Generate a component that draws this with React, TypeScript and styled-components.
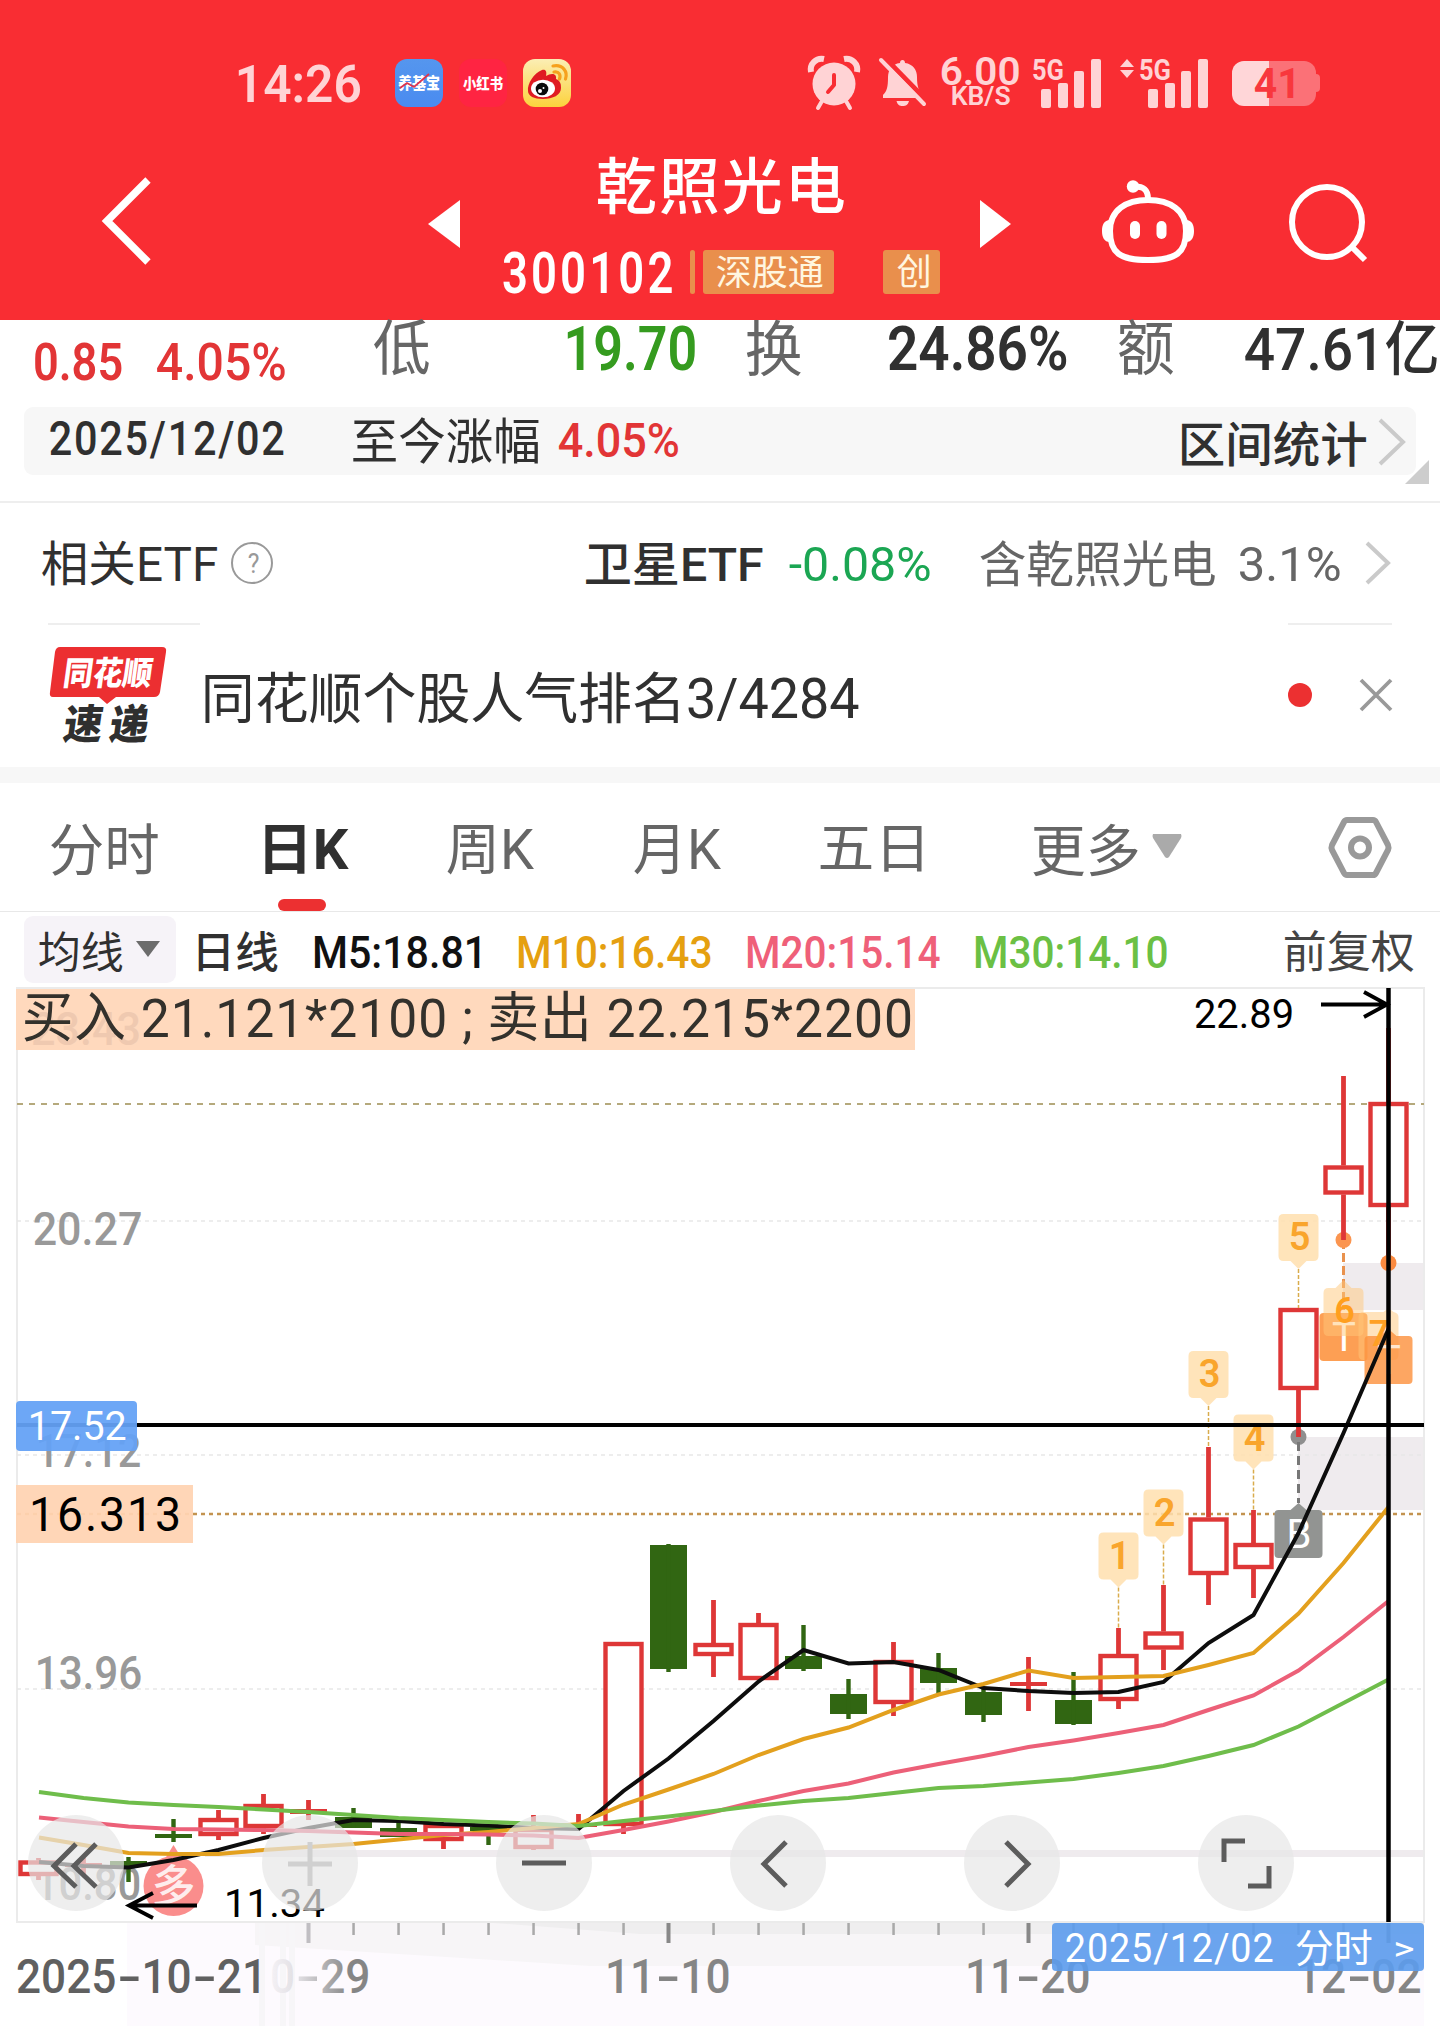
import React, { ReactNode, useLayoutEffect, useRef, useState } from "react";
import styled, { createGlobalStyle } from "styled-components";

const FONT = `Roboto, "Noto Sans CJK SC", sans-serif`;

const GlobalStyle = createGlobalStyle`
  html, body { margin: 0; padding: 0; background: #fff; }
  body { width: 1440px; font-family: ${FONT}; overflow-x: hidden; }
  svg { display: block; flex: none; overflow: visible; }
`;

/* ---------- text that fills an exact ink width ---------- */

interface LabelProps {
  w: number;
  size: number;
  ml?: number;
  mt?: number;
  weight?: number;
  color?: string;
  italic?: boolean;
  tracking?: number;
  children: string;
}

const LabelBox = styled.div<{ $w: number; $size: number; $ml: number; $mt: number }>`
  flex: none;
  width: ${(p) => p.$w}px;
  height: ${(p) => p.$size}px;
  margin-left: ${(p) => p.$ml}px;
  margin-top: ${(p) => p.$mt}px;
`;

const LabelText = styled.span<{
  $size: number;
  $weight: number;
  $color: string;
  $italic: boolean;
  $tracking: number;
}>`
  display: inline-block;
  white-space: pre;
  font-family: ${FONT};
  font-size: ${(p) => p.$size}px;
  line-height: ${(p) => p.$size}px;
  height: ${(p) => p.$size}px;
  font-weight: ${(p) => p.$weight};
  font-style: ${(p) => (p.$italic ? "italic" : "normal")};
  letter-spacing: ${(p) => p.$tracking}px;
  color: ${(p) => p.$color};
  transform-origin: 0 0;
`;

function Label({
  w,
  size,
  ml = 0,
  mt = 0,
  weight = 400,
  color = "#303030",
  italic = false,
  tracking = 0,
  children,
}: LabelProps) {
  const ref = useRef<HTMLSpanElement>(null);
  const [fit, setFit] = useState({ s: 1, x: 0, y: 0 });
  useLayoutEffect(() => {
    const ctx = document.createElement("canvas").getContext("2d");
    if (!ctx || !ref.current) return;
    ctx.font = `${italic ? "italic " : ""}${weight} ${size}px ${FONT}`;
    (ctx as unknown as { letterSpacing: string }).letterSpacing = `${tracking}px`;
    const m = ctx.measureText(children);
    const ink = m.actualBoundingBoxLeft + m.actualBoundingBoxRight;
    const s = w / ink;
    const baseline = size / 2 + (0.927 - 0.244) * size * 0.5;
    const mid = baseline - (m.actualBoundingBoxAscent - m.actualBoundingBoxDescent) / 2;
    setFit({ s, x: m.actualBoundingBoxLeft * s + 0.7, y: size / 2 - mid });
  }, [children, w, size, weight, italic, tracking]);
  return (
    <LabelBox $w={w} $size={size} $ml={ml} $mt={mt}>
      <LabelText
        ref={ref}
        $size={size}
        $weight={weight}
        $color={color}
        $italic={italic}
        $tracking={tracking}
        style={{ transform: `translate(${fit.x}px, ${fit.y}px) scaleX(${fit.s})` }}
      >
        {children}
      </LabelText>
    </LabelBox>
  );
}

const Slot = styled.div<{ $ml?: number; $mt?: number }>`
  flex: none;
  margin-left: ${(p) => p.$ml ?? 0}px;
  margin-top: ${(p) => p.$mt ?? 0}px;
`;

/* ---------- header ---------- */

const Page = styled.main`
  width: 1440px;
  height: 2026px;
  display: flex;
  flex-direction: column;
  overflow: hidden;
  background: #fff;
`;

const Header = styled.header`
  flex: none;
  height: 320px;
  background: #f92d33;
`;

const StatusBar = styled.div`
  box-sizing: border-box;
  height: 150px;
  padding-top: 16px;
  display: flex;
  align-items: center;
`;

const AppBadge = styled.div<{ $bg: string; $ml: number }>`
  width: 48px;
  height: 48px;
  margin-left: ${(p) => p.$ml}px;
  border-radius: 12px;
  background: ${(p) => p.$bg};
  display: flex;
  align-items: center;
  justify-content: center;
`;

const Speed = styled.div`
  margin-left: 14px;
  width: 79px;
  display: flex;
  flex-direction: column;
`;

const Battery = styled.div`
  position: relative;
  margin-left: 23px;
  width: 84px;
  height: 45px;
  border-radius: 12px;
  background: linear-gradient(90deg, #ffd6d8 0 37px, #fb7177 37px);
  display: flex;
  align-items: center;
  &::after {
    content: "";
    position: absolute;
    right: -4px;
    top: 13px;
    width: 4px;
    height: 18px;
    border-radius: 0 4px 4px 0;
    background: #fb7177;
  }
`;

const TitleBar = styled.div`
  height: 170px;
  display: flex;
  align-items: flex-start;
`;

const TitleColumn = styled.div`
  width: 470px;
  margin-left: 30px;
`;

const TitleLine = styled.div<{ $h: number }>`
  height: ${(p) => p.$h}px;
  display: flex;
  align-items: center;
`;

const Tag = styled.div<{ $w: number; $ml: number }>`
  flex: none;
  width: ${(p) => p.$w}px;
  height: 44px;
  margin-left: ${(p) => p.$ml}px;
  border-radius: 3px;
  background: #e98f4c;
  display: flex;
  align-items: center;
  justify-content: center;
`;

const PALE = "#ffd3d5";

function Signal({ arrows }: { arrows?: boolean }) {
  const w = arrows ? 89 : 69;
  const o = arrows ? 20 : 0;
  return (
    <svg width={w} height="50" viewBox={`0 0 ${w} 50`} fill={PALE}>
      {arrows && <path d="M7 1 L14 9 H0 Z M7 20 L14 12 H0 Z" />}
      <text x={o - 1} y="21.5" fontSize="29.5" fontWeight="700" fontFamily="Roboto, sans-serif" textLength="32" lengthAdjust="spacingAndGlyphs">
        5G
      </text>
      <rect x={o + 8} y="31" width="10" height="19" rx="2" />
      <rect x={o + 25} y="25" width="10" height="25" rx="2" />
      <rect x={o + 41} y="13" width="10" height="37" rx="2" />
      <rect x={o + 58} y="1" width="10" height="49" rx="2" />
    </svg>
  );
}

function AlarmIcon() {
  return (
    <svg width="50" height="52" viewBox="0 0 50 52">
      <path d="M2 15 A11 11 0 0 1 15 2" fill="none" stroke={PALE} strokeWidth="6" />
      <path d="M35 2 A11 11 0 0 1 48 15" fill="none" stroke={PALE} strokeWidth="6" />
      <path d="M13 44 L9 51 M37 44 L41 51" stroke={PALE} strokeWidth="4" strokeLinecap="round" />
      <circle cx="25" cy="27" r="21.5" fill={PALE} />
      <path d="M25 18 V28 L19 35" fill="none" stroke="#f92d33" strokeWidth="4" strokeLinecap="round" strokeLinejoin="round" />
    </svg>
  );
}

function BellOffIcon() {
  return (
    <svg width="47" height="48" viewBox="0 0 47 48">
      <path
        d="M23.500 1 C25 1 26 2 26 4 C34 5 38 11 38 18 C38 28 40 32 43 36 V39 H4 V36 C8 32 9 28 9 18 C9 11 13 5 21 4 C21 2 22 1 23.500 1 Z M17.500 42 H30 C29 46 27 47 23.700 47 C20.500 47 18.500 46 17.500 42 Z"
        fill={PALE}
      />
      <path d="M5 -2 L49 43" stroke="#f92d33" strokeWidth="5" />
      <path d="M2 1 L45 45" stroke={PALE} strokeWidth="4" strokeLinecap="round" />
    </svg>
  );
}

function WeiboIcon() {
  return (
    <svg width="48" height="48" viewBox="0 0 48 48">
      <path d="M5 32 C4 25 11 14 19 11 C23 10 24 13 23 17 C28 14 34 14 33 20 C38 22 38 26 38 29 C38 36 30 40 20 40 C11 40 5 37 5 32 Z" fill="#e01b22" />
      <ellipse cx="20" cy="29.500" rx="12" ry="8.800" fill="#fff" />
      <circle cx="19" cy="30" r="6.300" fill="#0b0b0b" />
      <circle cx="17" cy="32" r="2" fill="#fff" />
      <circle cx="20.500" cy="29" r="1" fill="#fff" />
      <path d="M31 13 C36 12 38 16 36.500 20 M30 7 C40 5 45 13 42.500 20" fill="none" stroke="#f6a11d" strokeWidth="3.200" strokeLinecap="round" />
    </svg>
  );
}

function RobotIcon() {
  return (
    <svg width="94" height="88" viewBox="0 0 94 88" fill="none" stroke="#fff" strokeWidth="6">
      <path d="M46 20 C68 20 84 30 84 51 C84 73 74 80 46 80 C18 80 8 73 8 51 C8 30 24 20 46 20 Z" />
      <path d="M46 19 C46 10 42 6 31 6.500" />
      <circle cx="31" cy="6.500" r="6.200" fill="#fff" stroke="none" />
      <path d="M8 40 C2 40 0 45 0 51 C0 57 2 62 8 62 Z M84 40 C90 40 92 45 92 51 C92 57 90 62 84 62 Z" fill="#fff" stroke="none" />
      <rect x="28" y="41" width="10" height="18" rx="5" fill="#fff" stroke="none" />
      <rect x="54.500" y="41" width="10" height="18" rx="5" fill="#fff" stroke="none" />
    </svg>
  );
}

function AppHeader() {
  return (
    <Header>
      <StatusBar>
        <Label ml={238} w={122} size={51} weight={600} color={PALE}>14:26</Label>
        <AppBadge $bg="linear-gradient(#5596ee, #4a8bf0)" $ml={35}>
          <svg width="48" height="48" viewBox="0 0 48 48">
            <text x="3" y="30" fontSize="16" fontWeight="900" fill="#fff" fontFamily='"Noto Sans CJK SC", sans-serif' textLength="42" lengthAdjust="spacingAndGlyphs">养基宝</text>
            <path d="M5 29 L12 24 L19 28 L34 15" fill="none" stroke="#e0334a" strokeWidth="1.800" />
          </svg>
        </AppBadge>
        <AppBadge $bg="#ff2442" $ml={16}>
          <svg width="48" height="48" viewBox="0 0 48 48">
            <text x="4" y="30" fontSize="15" fontWeight="900" fill="#fff" fontFamily='"Noto Sans CJK SC", sans-serif' textLength="40" lengthAdjust="spacingAndGlyphs">小红书</text>
          </svg>
        </AppBadge>
        <AppBadge $bg="linear-gradient(#fbeeb4, #fcd23c)" $ml={16}>
          <WeiboIcon />
        </AppBadge>
        <Slot $ml={238}><AlarmIcon /></Slot>
        <Slot $ml={20}><BellOffIcon /></Slot>
        <Speed>
          <Label w={78} size={38} weight={600} color={PALE} mt={-5}>6.00</Label>
          <Label ml={11} w={58} size={26} weight={600} color={PALE} mt={-7}>KB/S</Label>
        </Speed>
        <Slot $ml={14}><Signal /></Slot>
        <Slot $ml={18}><Signal arrows /></Slot>
        <Battery>
          <Label ml={22} w={39} size={42} weight={700} color="#f8373d">41</Label>
        </Battery>
      </StatusBar>
      <TitleBar>
        <Slot $ml={102} $mt={27}>
          <svg width="48" height="88" viewBox="0 0 48 88">
            <path d="M46 3 L5 44 L46 85" fill="none" stroke="#fff" strokeWidth="7.500" />
          </svg>
        </Slot>
        <Slot $ml={278} $mt={50}>
          <svg width="32" height="48"><path d="M32 0 V48 L0 24 Z" fill="#fff" /></svg>
        </Slot>
        <TitleColumn>
          <TitleLine $h={70}>
            <Label ml={107} w={246} size={61} weight={500} color="#fff" tracking={2}>乾照光电</Label>
          </TitleLine>
          <TitleLine $h={104}>
            <Label ml={12} w={169} size={58} weight={600} color="#fff" tracking={4}>300102</Label>
            <Tag $w={5} $ml={19} />
            <Tag $w={131} $ml={8}>
              <Label w={106} size={35} color="#fff6e0">深股通</Label>
            </Tag>
            <Tag $w={57} $ml={49}>
              <Label w={32} size={36} color="#fff6e0">创</Label>
            </Tag>
          </TitleLine>
        </TitleColumn>
        <Slot $ml={20} $mt={50}>
          <svg width="31" height="48"><path d="M0 0 V48 L31 24 Z" fill="#fff" /></svg>
        </Slot>
        <Slot $ml={91} $mt={30}><RobotIcon /></Slot>
        <Slot $ml={93} $mt={32}>
          <svg width="84" height="84" viewBox="0 0 84 84" fill="none" stroke="#fff" strokeWidth="6">
            <circle cx="38" cy="40" r="35" />
            <path d="M63 65 L76 78" />
          </svg>
        </Slot>
      </TitleBar>
    </Header>
  );
}

/* ---------- quote, info and news rows ---------- */

const RED = "#e23536";

const QuoteRow = styled.section`
  flex: none;
  height: 56px;
  display: flex;
  align-items: center;
`;

const InfoBar = styled.section`
  position: relative;
  flex: none;
  box-sizing: border-box;
  width: 1392px;
  height: 68px;
  margin: 31px 24px 26px;
  padding: 0 11px 2px 0;
  border-radius: 9px;
  background: #f7f7f7;
  display: flex;
  align-items: center;
`;

const Corner = styled.i`
  position: absolute;
  right: -13px;
  bottom: -9px;
  border-style: solid;
  border-width: 0 0 24px 24px;
  border-color: transparent transparent #cdcdcd transparent;
`;

const EtfRow = styled.section`
  flex: none;
  box-sizing: border-box;
  height: 122px;
  border-top: 2px solid #eeeeee;
  display: flex;
  align-items: center;
`;

const Help = styled.span`
  box-sizing: border-box;
  width: 42px;
  height: 42px;
  margin-left: 14px;
  border: 2px solid #999;
  border-radius: 50%;
  display: flex;
  align-items: center;
  justify-content: center;
`;

const Hairlines = styled.div`
  flex: none;
  height: 2px;
  padding: 0 48px;
  display: flex;
  justify-content: space-between;
  &::before { content: ""; width: 152px; background: #eee; }
  &::after { content: ""; width: 104px; background: #eee; }
`;

const NewsRow = styled.section`
  flex: none;
  box-sizing: border-box;
  height: 142px;
  padding-bottom: 3px;
  display: flex;
  align-items: center;
`;

const Dot = styled.i`
  width: 24px;
  height: 24px;
  margin-left: 430px;
  border-radius: 50%;
  background: #ec3031;
`;

const Band = styled.div`
  flex: none;
  height: 16px;
  background: #f7f7f7;
`;

function Chevron({ w, h }: { w: number; h: number }) {
  return (
    <svg width={w} height={h} viewBox={`0 0 ${w} ${h}`}>
      <path d={`M2 2 L${w - 3} ${h / 2} L2 ${h - 2}`} fill="none" stroke="#cacaca" strokeWidth="4" />
    </svg>
  );
}

function ExpressLogo() {
  return (
    <svg width="120" height="98" viewBox="49 646 120 98">
      <path d="M60 647 H162 Q167 647 166 652 L160 692 Q159 697 154 697 H116 L107 704 L99 697 H53 Q49 697 50 692 L55 652 Q56 647 60 647 Z" fill="#ec2f31" />
      <g fontFamily='"Noto Sans CJK SC", sans-serif' fontWeight="900">
        <text transform="translate(62 684.500) skewX(-8)" fontSize="33" fill="#fff" textLength="89" lengthAdjust="spacingAndGlyphs">同花顺</text>
        <text transform="translate(62 739) skewX(-8)" fontSize="41" fill="#2f2f2f" textLength="39" lengthAdjust="spacingAndGlyphs">速</text>
        <text transform="translate(108 739) skewX(-8)" fontSize="41" fill="#2f2f2f" textLength="39" lengthAdjust="spacingAndGlyphs">递</text>
      </g>
    </svg>
  );
}

/* ---------- tabs ---------- */

const Tabs = styled.nav`
  flex: none;
  box-sizing: border-box;
  height: 129px;
  border-bottom: 1px solid #e8e8e8;
  display: flex;
  align-items: stretch;
`;

const Tab = styled.div<{ $ml: number; $active?: boolean }>`
  margin-left: ${(p) => p.$ml}px;
  padding-top: 39px;
  display: flex;
  flex-direction: column;
  align-items: center;
  &::after {
    content: "";
    display: ${(p) => (p.$active ? "block" : "none")};
    width: 48px;
    height: 12px;
    margin-top: 21px;
    margin-right: 8px;
    border-radius: 6px;
    background: #ec3031;
  }
`;

const MaRow = styled.div`
  flex: none;
  height: 75px;
  display: flex;
  align-items: center;
`;

const MaPicker = styled.div`
  box-sizing: border-box;
  width: 152px;
  height: 67px;
  margin: 0 0 0 24px;
  border-radius: 9px;
  background: #f6f3f8;
  display: flex;
  align-items: center;
`;

/* ---------- chart ---------- */

type Candle = [k: number, up: 0 | 1, high: number, top: number, bottom: number, low: number];

const candles: Candle[] = [
  [-14, 1, 1858, 1860.5, 1876, 1880],
  [-13, 1, 1858, 1863, 1867, 1876],
  [-12, 0, 1857, 1861, 1866, 1882],
  [-11, 0, 1819, 1834, 1838, 1842],
  [-10, 1, 1810, 1818, 1836, 1840],
  [-9, 1, 1794, 1804, 1828, 1834],
  [-8, 1, 1800, 1809, 1814, 1820],
  [-7, 0, 1808, 1817, 1828, 1828],
  [-6, 0, 1820, 1828, 1837, 1837],
  [-5, 1, 1824, 1824, 1841, 1849],
  [-4, 0, 1824, 1827, 1831, 1845],
  [-3, 1, 1815, 1828, 1849, 1850],
  [-2, 1, 1814, 1823, 1827, 1829],
  [-1, 1, 1642, 1642, 1826, 1834],
  [0, 0, 1544, 1545, 1669, 1672],
  [1, 1, 1600, 1643, 1656, 1677],
  [2, 1, 1613, 1623, 1680, 1680],
  [3, 0, 1625, 1656, 1669, 1671],
  [4, 0, 1679, 1694, 1714, 1719],
  [5, 1, 1642, 1660, 1704, 1716],
  [6, 0, 1653, 1668, 1683, 1694],
  [7, 0, 1688, 1692, 1715, 1722],
  [8, 1, 1657, 1682, 1686, 1711],
  [9, 0, 1672, 1700, 1724, 1725],
  [10, 1, 1628, 1654, 1701, 1709],
  [11, 1, 1585, 1631.5, 1649.5, 1670],
  [12, 1, 1447, 1517.5, 1575, 1605],
  [13, 1, 1510, 1543, 1569, 1598],
  [14, 1, 1308, 1308, 1390, 1437],
  [15, 1, 1076, 1165.5, 1194.5, 1240],
  [16, 1, 1028, 1102, 1207, 1263],
];

const cx = (k: number) => 668.5 + 45 * k;

const averages: { color: string; ys: number[] }[] = [
  { color: "#0d0d0d", ys: [1862, 1866, 1867.5, 1860, 1850, 1838, 1828, 1820, 1821, 1824, 1825.5, 1828, 1829, 1791, 1758.5, 1721, 1681.5, 1650, 1663.5, 1662, 1670, 1688, 1691, 1693, 1692, 1682, 1643, 1615, 1533, 1433, 1329] },
  { color: "#e3a01e", ys: [1837.5, 1845, 1853, 1854, 1854, 1850, 1847, 1844, 1839.5, 1835, 1832, 1828, 1824, 1804.5, 1789.5, 1774, 1755, 1739, 1727.5, 1710, 1694.5, 1684, 1670.5, 1678, 1677, 1676, 1665, 1653, 1613.5, 1563, 1507] },
  { color: "#ec6078", ys: [1817.5, 1822, 1826.5, 1829, 1829.5, 1830, 1831, 1832.5, 1834, 1834, 1834.5, 1835.5, 1838, 1830, 1821.5, 1812, 1801, 1791, 1783.5, 1772.5, 1764, 1756, 1747, 1740.5, 1733, 1725, 1710, 1695.5, 1670.5, 1637, 1601] },
  { color: "#6fbd4b", ys: [1792, 1798, 1802.5, 1805, 1807, 1809.5, 1812, 1815, 1818, 1820, 1822, 1823.5, 1826, 1821, 1816.5, 1811, 1805.5, 1801, 1798, 1793, 1788, 1786, 1782.5, 1779, 1773, 1766, 1756, 1745, 1726.5, 1703, 1679.5] },
];

const badges: [n: string, k: number, top: number, end: number][] = [
  ["1", 10, 1532.5, 1628],
  ["2", 11, 1489.5, 1585],
  ["3", 12, 1351, 1447],
  ["4", 13, 1414.5, 1510],
  ["5", 14, 1214, 1308],
];

const ChartPanel = styled.section`
  position: relative;
  flex: none;
  width: 1440px;
  height: 1039px;
`;

const Controls = styled.div`
  position: absolute;
  left: 28px;
  top: 828px;
  display: flex;
  gap: 138px;
`;

const RoundButton = styled.button`
  width: 96px;
  height: 96px;
  padding: 0;
  border: 0;
  border-radius: 50%;
  background: rgba(231, 231, 231, 0.7);
`;

const PriceChip = styled.div<{ $top: number; $w: number; $h: number; $bg: string; $r: number }>`
  position: absolute;
  left: 16px;
  top: ${(p) => p.$top}px;
  width: ${(p) => p.$w}px;
  height: ${(p) => p.$h}px;
  border-radius: ${(p) => p.$r}px;
  background: ${(p) => p.$bg};
  display: flex;
  align-items: center;
`;

const DateChip = styled.div`
  position: absolute;
  left: 1052px;
  top: 936px;
  width: 372px;
  height: 48px;
  border-radius: 4px;
  background: rgba(92, 156, 236, 0.91);
  display: flex;
  align-items: center;
`;

interface PlotTextProps {
  x: number;
  y: number;
  w: number;
  size: number;
  fill: string;
  weight?: number;
  children: ReactNode;
}

function PlotText({ x, y, w, size, fill, weight = 400, children }: PlotTextProps) {
  return (
    <text x={x - size * 0.05} y={y} fontSize={size} fontWeight={weight} fill={fill} textLength={w + size * 0.1} lengthAdjust="spacingAndGlyphs">
      {children}
    </text>
  );
}

/* Axis dates sit on an even 25px grid, so the hyphen is as wide as a digit. */
function AxisDate({ x, fill, children }: { x: number; fill: string; children: string }) {
  const parts = children.split(/(-)/);
  let at = x - 2;
  return (
    <text y="1993" fontSize="48" fontWeight="500" fill={fill}>
      {parts.map((part, i) => {
        const start = at;
        const width = part.length * 25.1;
        at += width;
        return (
          <tspan key={i} x={start + (part === "-" ? 1 : 0)} textLength={part === "-" ? 24 : width} lengthAdjust="spacingAndGlyphs">
            {part}
          </tspan>
        );
      })}
    </text>
  );
}

function CandleShape({ c: [k, up, high, top, bottom, low] }: { c: Candle }) {
  const x = cx(k);
  if (!up) {
    return (
      <g fill="#316612">
        <rect x={x - 18.5} y={top} width="37" height={bottom - top} />
        <rect x={x - 2.2} y={high} width="4.400" height={low - high} />
      </g>
    );
  }
  const flat = bottom - top < 7;
  return (
    <g fill="#de3737">
      <rect x={x - 2.4} y={high} width="4.800" height={Math.max(0, top - high)} />
      <rect x={x - 2.4} y={bottom} width="4.800" height={Math.max(0, low - bottom)} />
      {flat ? (
        <rect x={x - 18.5} y={top} width="37" height={bottom - top} />
      ) : (
        <rect x={x - 18} y={top + 2} width="36" height={bottom - top - 4} fill="#fff" stroke="#de3737" strokeWidth="4.400" />
      )}
    </g>
  );
}

function KLine() {
  return (
    <svg width="1440" height="1039" viewBox="0 987 1440 1039" fontFamily='Roboto, "Noto Sans CJK SC", sans-serif'>
      <defs>
        <linearGradient id="fade" gradientUnits="userSpaceOnUse" x1="273" y1="0" x2="350" y2="0">
          <stop offset="0" stopColor="#f3f0f4" />
          <stop offset="0.35" stopColor="#dedce0" />
          <stop offset="1" stopColor="#858585" />
        </linearGradient>
      </defs>
      <rect x="127" y="1922" width="1297" height="104" fill="#fdfafe" />
      <path d="M255 1922 H1424 V1966 H590 L255 1945 Z" fill="#f7f5f7" />
      <path d="M480 1922 H1424 V1934 H640 Z" fill="#efeeef" />
      <path d="M262 1922 V2026 M283 1922 V2026 M292 1922 V2026" stroke="#f7f6f8" strokeWidth="6" />

      <g fill="#efebee">
        <rect x="1343" y="1263" width="81" height="47" />
        <rect x="1298" y="1437" width="126" height="73" />
        <rect x="205" y="1850" width="1219" height="7" />
      </g>
      <rect x="17" y="988" width="1407" height="934" fill="none" stroke="#ebebeb" strokeWidth="2" />
      <g strokeDasharray="4 4" strokeWidth="1.500" stroke="#e7e7e7">
        <path d="M17 1221 H1424 M17 1455 H1424 M17 1689 H1424" />
      </g>
      <path d="M17 1104 H1424" stroke="#b5a97c" strokeWidth="2.200" strokeDasharray="6 6" />
      <path d="M17 1514 H1424" stroke="#c3934f" strokeWidth="2.300" strokeDasharray="4 4" />

      <PlotText x={35} y={1245} w={105} size={47} fill="#999" weight={500}>20.27</PlotText>
      <PlotText x={38} y={1467} w={101} size={46} fill="#999" weight={500}>17.12</PlotText>
      <PlotText x={37} y={1689} w={103} size={47} fill="#999" weight={500}>13.96</PlotText>
      <PlotText x={37} y={1900} w={102} size={46} fill="#999" weight={500}>10.80</PlotText>

      <path d="M1343.500 1240 V1310" stroke="#e9924e" strokeWidth="3" strokeDasharray="9 4" />
      <circle cx="1343.500" cy="1240" r="8" fill="#fb9550" />
      <circle cx="1298.500" cy="1437" r="8" fill="#8f8f8f" />
      <path d="M1298.500 1442 V1503" stroke="#777" strokeWidth="3" strokeDasharray="9 5" />

      {candles.map((c) => <CandleShape key={c[0]} c={c} />)}

      {badges.map(([n, k, top, end]) => (
        <g key={n}>
          <path d={`M${cx(k)} ${top + 55} V${end}`} stroke="#d9ac4c" strokeWidth="1.500" strokeDasharray="4 2" />
          <path d={`M${cx(k) - 15} ${top} h30 q5 0 5 5 v37 q0 5 -5 5 h-7 l-8 8 l-8 -8 h-7 q-5 0 -5 -5 v-37 q0 -5 5 -5 Z`} fill="#ffdfae" fillOpacity="0.85" />
          <text x={cx(k) + 1} y={top + 36} fontSize="38" fontWeight="600" textAnchor="middle" fill="#f9a52c">{n}</text>
        </g>
      ))}

      <rect x="1319.500" y="1313" width="48" height="48" rx="4" fill="#fd9f54" />
      <text x="1344" y="1350.500" fontSize="40" textAnchor="middle" fill="#fff">T</text>
      <path d="M1343.500 1280 l8 8 h7 q5 0 5 5 v38 q0 5 -5 5 h-30 q-5 0 -5 -5 v-38 q0 -5 5 -5 h7 Z" fill="#ffc87a" fillOpacity="0.5" />
      <text x="1344.500" y="1323" fontSize="36" fontWeight="600" textAnchor="middle" fill="#ff9f1e">6</text>
      <path d="M1388.500 1308 l5 4 q5 1 5 5 v38 q0 5 -5 5 h-30 q-5 0 -5 -5 v-38 q0 -5 5 -5 h20 Z" fill="#ffc87a" fillOpacity="0.5" />
      <path d="M1388.500 1329 l8 7 h12 q4 0 4 4 v40 q0 4 -4 4 h-40 q-4 0 -4 -4 v-40 q0 -4 4 -4 h12 Z" fill="#fd9240" fillOpacity="0.82" />
      <text x="1389" y="1374" fontSize="40" textAnchor="middle" fill="#ffe6d0">T</text>
      <text x="1379" y="1346" fontSize="36" fontWeight="600" textAnchor="middle" fill="#ffa024">7</text>
      <circle cx="1388.500" cy="1263" r="8" fill="#fb8a40" />

      <path d="M1298.500 1503 l8 7 h12 q4 0 4 4 v40 q0 4 -4 4 h-40 q-4 0 -4 -4 v-40 q0 -4 4 -4 h12 Z" fill="#929492" />
      <text x="1299" y="1548" fontSize="40" textAnchor="middle" fill="#fff">B</text>

      <circle cx="173.500" cy="1886" r="30" fill="#fa8d8c" />
      <path d="M173.500 1845 l8 13 h-16 Z" fill="#fa8d8c" />
      <text x="173.500" y="1902" fontSize="44" textAnchor="middle" fill="#fff" fillOpacity="0.85" fontWeight="500" fontFamily='"Noto Sans CJK SC", sans-serif'>多</text>

      {averages.map((a) => (
        <polyline key={a.color} points={a.ys.map((y, i) => `${i === 0 ? 39 : cx(i - 14)},${y}`).join(" ")} fill="none" stroke={a.color} strokeWidth="4" />
      ))}

      <path d="M17 1425 H1424" stroke="#000" strokeWidth="4" />
      <path d="M1388.500 988 V1922" stroke="#000" strokeWidth="4.500" />

      <g fill="none" stroke="#000" strokeWidth="3.800">
        <path d="M1321 1004.500 H1387 M1364 992 L1387 1004.500 L1364 1017" />
        <path d="M197 1905.500 H130 M153 1893 L129 1905.500 L153 1918" />
      </g>
      <PlotText x={1196} y={1028} w={96} size={41} fill="#000">22.89</PlotText>
      <PlotText x={226} y={1917} w={97} size={39} fill="#000">11.34</PlotText>

      {Array.from({ length: 24 }, (_, i) => i - 7).map((k) => (
        <rect key={k} x={cx(k) - 1.2} y="1923" width="2.500" height="12" fill="#a9a9a9" />
      ))}
      {[-8, 0, 8, 16].map((k) => (
        <rect key={k} x={cx(k) - 2} y="1923" width="4" height="20" fill={k === -8 ? "#c0bec2" : "#888"} />
      ))}

      <AxisDate x={18} fill="#606060">2025-10-21</AxisDate>
      <AxisDate x={272} fill="url(#fade)">0-29</AxisDate>
      <AxisDate x={607} fill="#858585">11-10</AxisDate>
      <AxisDate x={967} fill="#858585">11-20</AxisDate>
      <AxisDate x={1298} fill="#858585">12-02</AxisDate>
    </svg>
  );
}

const glyphs: { d: string; color: string }[] = [
  { d: "M48 29 L26 51 L48 72 M68 29 L46 51 L68 72", color: "#5c5c5c" },
  { d: "M26 49 H70 M48 27 V71", color: "#d0d0d0" },
  { d: "M26 48 H70", color: "#5c5c5c" },
  { d: "M56 27 L34 49 L56 71", color: "#5c5c5c" },
  { d: "M42 27 L64 49 L42 71", color: "#5c5c5c" },
  { d: "M47 26 H26 V47 M71 51 V71 H50", color: "#5c5c5c" },
];

export default function App() {
  return (
    <Page>
      <GlobalStyle />
      <AppHeader />

      <QuoteRow>
        <Label ml={34} w={87} size={52} weight={600} color={RED} mt={27}>0.85</Label>
        <Label ml={35} w={128} size={52} weight={500} color={RED} mt={27}>4.05%</Label>
        <Label ml={89} w={56} size={60} color="#666">低</Label>
        <Label ml={138} w={127} size={61} weight={600} color="#359b1f">19.70</Label>
        <Label ml={52} w={55} size={60} color="#666">换</Label>
        <Label ml={87} w={178} size={61} weight={600}>24.86%</Label>
        <Label ml={52} w={55} size={60} color="#666">额</Label>
        <Label ml={71} w={192} size={59} weight={500} mt={-1}>47.61亿</Label>
      </QuoteRow>

      <InfoBar>
        <Label ml={25} w={234} size={48} weight={500} tracking={2}>2025/12/02</Label>
        <Label ml={69} w={186} size={49}>至今涨幅</Label>
        <Label ml={20} w={120} size={48} weight={500} color={RED}>4.05%</Label>
        <Label ml={503} w={185} size={48} weight={500} mt={8}>区间统计</Label>
        <Slot $ml={12} $mt={4}><Chevron w={28} h={48} /></Slot>
        <Corner />
      </InfoBar>

      <EtfRow>
        <Label ml={41} w={176} size={48}>相关ETF</Label>
        <Help><Label w={11} size={27} color="#999">?</Label></Help>
        <Label ml={312} w={177} size={47} weight={500}>卫星ETF</Label>
        <Label ml={26} w={141} size={49} color="#1ba653" mt={2}>-0.08%</Label>
        <Label ml={50} w={236} size={49} color="#666">含乾照光电</Label>
        <Label ml={24} w={100} size={49} color="#666" mt={2}>3.1%</Label>
        <Slot $ml={26}><Chevron w={26} h={44} /></Slot>
      </EtfRow>
      <Hairlines />
      <NewsRow>
        <Slot $ml={49}><ExpressLogo /></Slot>
        <Label ml={35} w={654} size={55} mt={5}>同花顺个股人气排名3/4284</Label>
        <Dot />
        <Slot $ml={47}>
          <svg width="34" height="34"><path d="M2 2 L32 32 M32 2 L2 32" stroke="#999" strokeWidth="3.800" /></svg>
        </Slot>
      </NewsRow>
      <Band />

      <Tabs>
        <Tab $ml={50}><Label w={107} size={56} color="#666">分时</Label></Tab>
        <Tab $ml={107} $active><Label w={84} size={56} weight={700}>日K</Label></Tab>
        <Tab $ml={98}><Label w={88} size={56} color="#666">周K</Label></Tab>
        <Tab $ml={99}><Label w={88} size={56} color="#666">月K</Label></Tab>
        <Tab $ml={99}><Label w={101} size={54} color="#666">五日</Label></Tab>
        <Tab $ml={111}><Label w={105} size={56} color="#666">更多</Label></Tab>
        <Slot $ml={15} $mt={51}>
          <svg width="30" height="25"><path d="M1 0 H29 Q30 2 29 4 L17 23 Q15 25 13 23 L1 4 Q0 2 1 0 Z" fill="#aaa" /></svg>
        </Slot>
        <Slot $ml={146} $mt={34}>
          <svg width="64" height="61" viewBox="0 0 64 61" fill="none" stroke="#999" strokeWidth="6">
            <path d="M19 3 H45 Q47 3 48 5 L60 28 Q61 30.500 60 33 L48 56 Q47 58 45 58 H19 Q17 58 16 56 L4 33 Q3 30.500 4 28 L16 5 Q17 3 19 3 Z" />
            <circle cx="32" cy="30.500" r="9" />
          </svg>
        </Slot>
      </Tabs>

      <MaRow>
        <MaPicker>
          <Label ml={14} w={84} size={43} mt={3}>均线</Label>
          <Slot $ml={14} $mt={-2}>
            <svg width="24" height="16"><path d="M0 0 H24 L12 16 Z" fill="#6c6c6c" /></svg>
          </Slot>
        </MaPicker>
        <Label ml={22} w={79} size={43} weight={500} mt={3}>日线</Label>
        <Label ml={37} w={165} size={44} weight={500} color="#111" mt={4}>M5:18.81</Label>
        <Label ml={39} w={192} size={44} weight={500} color="#e5a010" mt={4}>M10:16.43</Label>
        <Label ml={37} w={192} size={44} weight={500} color="#ef6079" mt={4}>M20:15.14</Label>
        <Label ml={36} w={191} size={44} weight={500} color="#6bc044" mt={4}>M30:14.10</Label>
        <Label ml={118} w={129} size={44} color="#444" mt={3}>前复权</Label>
      </MaRow>

      <ChartPanel>
        <KLine />
        <PriceChip $top={2} $w={899} $h={61} $bg="#ffd9bd" $r={0}>
          <svg width="899" height="61" viewBox="16 989 899 61" fontFamily="Roboto, sans-serif">
            <text x="31" y="1045" fontSize="46" fontWeight="500" fill="#efc9b0" textLength="110" lengthAdjust="spacingAndGlyphs">23.43</text>
          </svg>
          <Label ml={-892} w={887} size={54} color="#33312c" tracking={1} mt={-3}>买入 21.121*2100 ; 卖出 22.215*2200</Label>
        </PriceChip>
        <PriceChip $top={414} $w={121} $h={50} $bg="rgba(100,161,245,0.94)" $r={4}>
          <Label ml={14} w={95} size={41} color="#fff" mt={1}>17.52</Label>
        </PriceChip>
        <PriceChip $top={498} $w={177} $h={58} $bg="rgba(255,211,178,0.94)" $r={0}>
          <Label ml={16} w={146} size={49} color="#000" tracking={2}>16.313</Label>
        </PriceChip>
        <Controls>
          {glyphs.map((g) => (
            <RoundButton key={g.d}>
              <svg width="96" height="96" viewBox="0 0 96 96">
                <path d={g.d} fill="none" stroke={g.color} strokeWidth="5" />
              </svg>
            </RoundButton>
          ))}
        </Controls>
        <DateChip>
          <Label ml={13} w={207} size={41} color="#fff" tracking={1} mt={4}>2025/12/02</Label>
          <Label ml={23} w={76} size={39} color="#fff" mt={3}>分时</Label>
          <Label ml={24} w={18} size={34} color="#fff" mt={3}>{">"}</Label>
        </DateChip>
      </ChartPanel>
    </Page>
  );
}
